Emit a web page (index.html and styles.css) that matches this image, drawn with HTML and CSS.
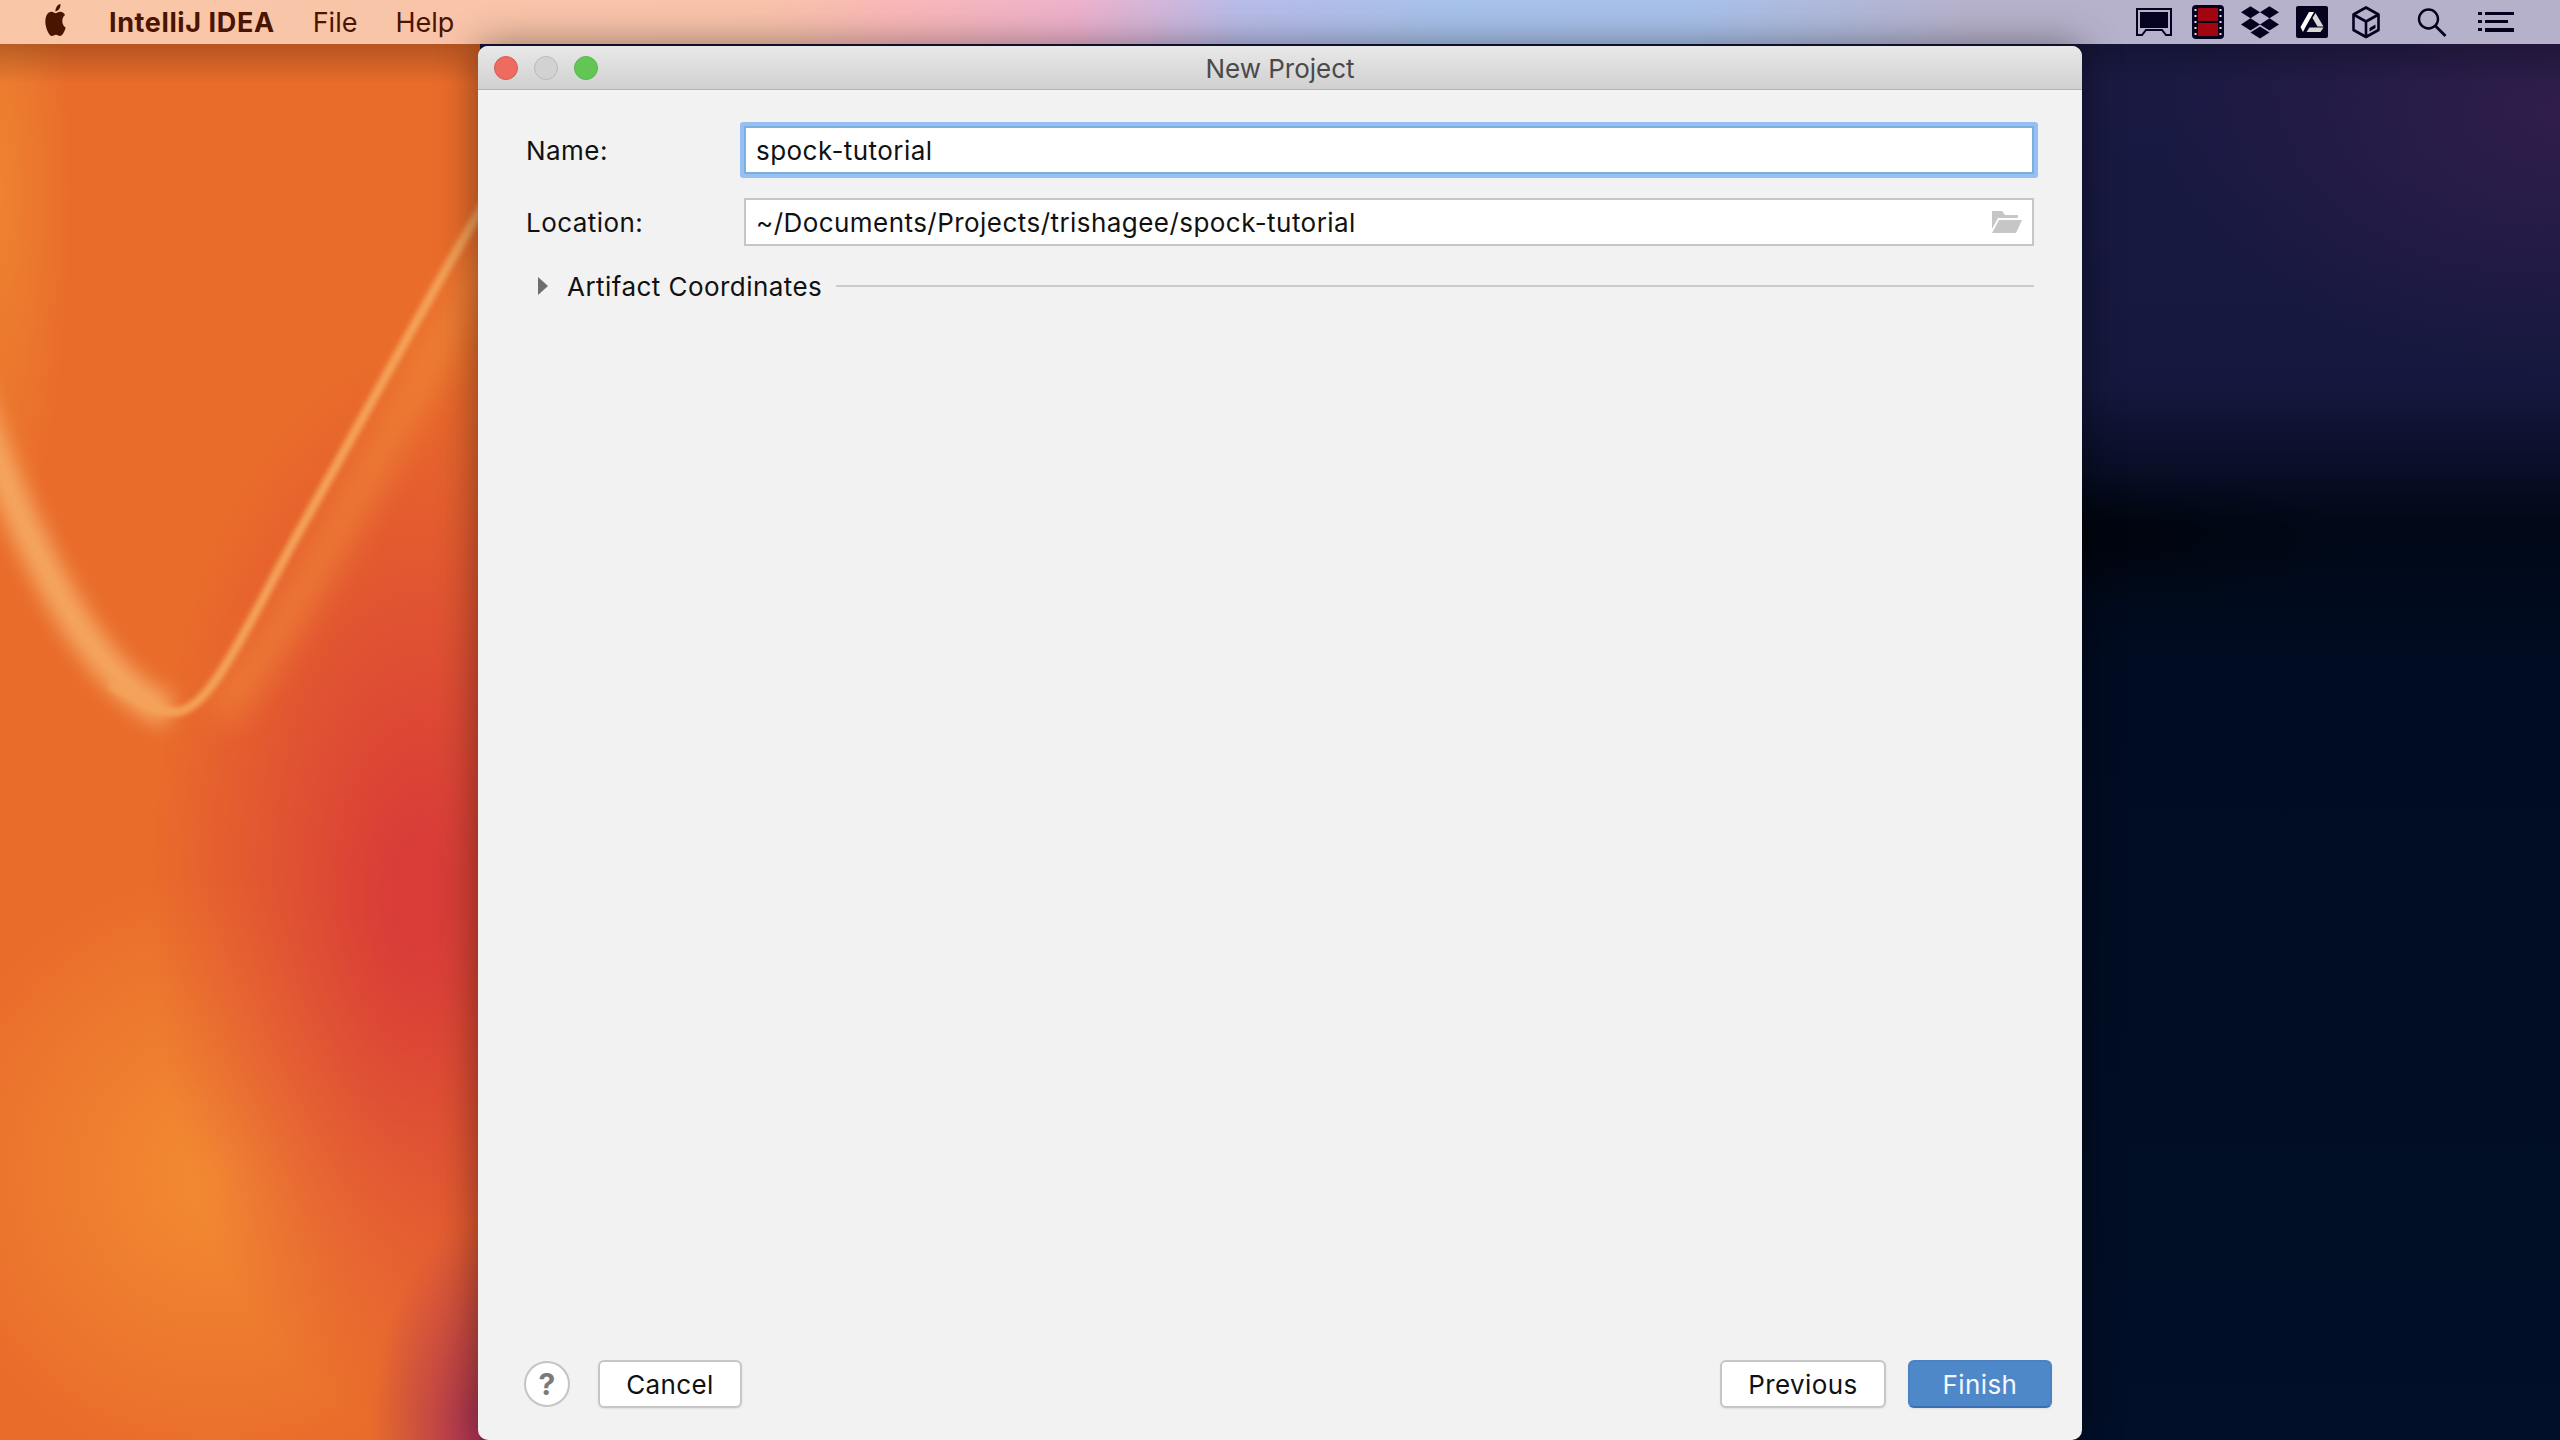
FILE: index.html
```html
<!DOCTYPE html>
<html lang="en">
<head>
    <meta charset="UTF-8">
    <meta name="viewport" content="width=device-width, initial-scale=1.0">
    <title>New Project</title>
    <link rel="stylesheet" href="styles.css">
</head>
<body>
    <header class="menubar">
        <svg class="apple-logo" viewBox="0 0 24 24" preserveAspectRatio="none" aria-hidden="true">
            <path d="M12.152 6.896c-.948 0-2.415-1.078-3.96-1.04-2.04.027-3.91 1.183-4.961 3.014-2.117 3.675-.546 9.103 1.519 12.09 1.013 1.454 2.208 3.09 3.792 3.039 1.52-.065 2.09-.987 3.935-.987 1.831 0 2.35.987 3.96.948 1.637-.026 2.676-1.48 3.676-2.948 1.156-1.688 1.636-3.325 1.662-3.415-.039-.013-3.182-1.221-3.22-4.857-.026-3.04 2.48-4.494 2.597-4.559-1.429-2.09-3.623-2.324-4.39-2.376-2-.156-3.675 1.09-4.61 1.09zM15.53 3.83c.843-1.012 1.4-2.427 1.245-3.83-1.207.052-2.662.805-3.532 1.818-.78.896-1.454 2.338-1.273 3.714 1.338.104 2.715-.688 3.559-1.701"/>
        </svg>
        <span class="menu-app">IntelliJ IDEA</span>
        <span class="menu-item">File</span>
        <span class="menu-item">Help</span>

        <div class="tray">
            <!-- screen -->
            <svg class="tray-icon" width="54" height="44" viewBox="0 0 54 44">
                <path d="M10 9h34v26h-5l-4-5H19l-4 5h-5z" fill="none" stroke="#05021f" stroke-width="2"/>
                <rect x="13" y="12" width="28" height="16" fill="#05021f"/>
            </svg>
            <!-- film strip -->
            <svg class="tray-icon" width="54" height="44" viewBox="0 0 54 44">
                <rect x="11" y="5" width="32" height="34" rx="4" fill="#05021f"/>
                <rect x="17" y="8" width="20" height="13" fill="#a00510"/>
                <rect x="17" y="23" width="20" height="13" fill="#a00510"/>
                <g fill="#ddd">
                    <rect x="13.5" y="9" width="2" height="2"/>
                    <rect x="13.5" y="15" width="2" height="2"/>
                    <rect x="13.5" y="21" width="2" height="2"/>
                    <rect x="13.5" y="27" width="2" height="2"/>
                    <rect x="13.5" y="33" width="2" height="2"/>
                    <rect x="38.5" y="9" width="2" height="2"/>
                    <rect x="38.5" y="15" width="2" height="2"/>
                    <rect x="38.5" y="21" width="2" height="2"/>
                    <rect x="38.5" y="27" width="2" height="2"/>
                    <rect x="38.5" y="33" width="2" height="2"/>
                </g>
            </svg>
            <!-- dropbox -->
            <svg class="tray-icon" width="50" height="44" viewBox="0 0 50 44">
                <path transform="translate(6 3.4) scale(1.583)" fill="#05021f" d="M6 1.807L0 5.629l6 3.822 6.001-3.822L6 1.807zM18 1.807l-6 3.822 6 3.822 6-3.822-6-3.822zM0 13.274l6 3.822 6.001-3.822L6 9.452l-6 3.822zM18 9.452l-6 3.822 6 3.822 6-3.822-6-3.822zM6 18.371l6.001 3.822 6-3.822-6-3.822L6 18.371z"/>
            </svg>
            <!-- drive -->
            <svg class="tray-icon" width="54" height="44" viewBox="0 0 54 44">
                <rect x="11" y="6" width="32" height="32" rx="2" fill="#05021f"/>
                <path fill="#fff" d="M24 12h5L20.500 27l-2.500 5-2.500-5z"/>
                <path fill="#d8d8d8" d="M30.500 13l8 13.500h-6L27.500 18z"/>
                <path fill="#d8d8d8" d="M24.500 27.500h14l-3 4.500H21.500z"/>
            </svg>
            <!-- box -->
            <svg class="tray-icon" width="54" height="44" viewBox="0 0 54 44">
                <path d="M27 7.500l12.500 7v15.500L27 37l-12.500-7V14.500zM14.500 14.500L27 21.500l12.500-7M27 21.500V37" fill="none" stroke="#05021f" stroke-width="2.600" stroke-linejoin="round"/>
                <path d="M30.500 31.500l6-3.500v-3.500l-6 3.500z" fill="#05021f"/>
            </svg>
            <!-- search -->
            <svg class="tray-icon" width="78" height="44" viewBox="0 0 78 44">
                <circle cx="35.500" cy="19" r="9.500" fill="none" stroke="#05021f" stroke-width="2.400"/>
                <path d="M42.500 26l10 10" stroke="#05021f" stroke-width="2.800"/>
            </svg>
            <!-- notification list -->
            <svg class="tray-icon" width="50" height="44" viewBox="0 0 50 44">
                <g fill="#05021f">
                    <rect x="7" y="12" width="4" height="3"/>
                    <rect x="7" y="20" width="4" height="3"/>
                    <rect x="7" y="28" width="4" height="3"/>
                    <rect x="14" y="12" width="29" height="3"/>
                    <rect x="14" y="20" width="23" height="3"/>
                    <rect x="14" y="28" width="29" height="4"/>
                </g>
            </svg>
        </div>
    </header>

    <main class="desktop">
        <!-- wallpaper streak on the left -->
        <svg class="streak" width="480" height="800" viewBox="0 0 480 800">
            <defs>
                <filter id="soft-wide" x="-30%" y="-30%" width="160%" height="160%"><feGaussianBlur stdDeviation="10"/></filter>
                <filter id="soft-thin" x="-30%" y="-30%" width="160%" height="160%"><feGaussianBlur stdDeviation="2.500"/></filter>
                <filter id="soft-glow" x="-30%" y="-30%" width="160%" height="160%"><feGaussianBlur stdDeviation="16"/></filter>
            </defs>
            <path d="M220 670C260 620 290 570 330 500C380 410 440 300 490 210" fill="none" stroke="#f28a3a" stroke-width="30" opacity="0.7" filter="url(#soft-glow)"/>
            <path d="M-30 340C20 490 90 640 170 668" fill="none" stroke="#f5a862" stroke-width="32" filter="url(#soft-wide)"/>
            <path d="M110 640C135 655 155 668 175 668C210 668 245 585 300 486C360 380 430 250 490 150" fill="none" stroke="#f4a258" stroke-width="9" filter="url(#soft-thin)"/>
        </svg>

        <section class="dialog">
            <div class="titlebar">
                <div class="traffic">
                    <span class="light light-close"></span>
                    <span class="light light-min"></span>
                    <span class="light light-max"></span>
                </div>
                <span class="title">New Project</span>
            </div>

            <div class="form">
                <div class="form-row">
                    <label class="form-label">Name:</label>
                    <div class="field field-focus">spock-tutorial</div>
                </div>
                <div class="form-row">
                    <label class="form-label">Location:</label>
                    <div class="field">
                        ~/Documents/Projects/trishagee/spock-tutorial
                        <svg class="folder-icon" width="30" height="22" viewBox="0 0 30 22">
                            <path d="M0 0h10l3 4h13v3H6L0 18z" fill="#c6c6c6"/>
                            <path d="M7 9h23l-6 13H0z" fill="#c6c6c6"/>
                        </svg>
                    </div>
                </div>
                <div class="disclosure">
                    <span class="arrow"></span>
                    <span class="disclosure-label">Artifact Coordinates</span>
                    <span class="disclosure-line"></span>
                </div>
            </div>

            <div class="footer">
                <button class="help-button">?</button>
                <button class="button button-cancel">Cancel</button>
                <div class="footer-right">
                    <button class="button button-previous">Previous</button>
                    <button class="button button-finish">Finish</button>
                </div>
            </div>
        </section>
    </main>
</body>
</html>
```

FILE: styles.css
```css
html, body {
    margin: 0;
    padding: 0;
    height: 100%;
}

body {
    display: flex;
    flex-direction: column;
    overflow: hidden;
    font-family: "Inter", "Liberation Sans", sans-serif;
    color: #111;
}

/* menu bar */
.menubar {
    height: 44px;
    flex-shrink: 0;
    display: flex;
    align-items: center;
    padding-left: 43px;
    background: linear-gradient(to right, #f9c7a7 0%, #f9c3ab 30%, #fab8b8 35%, #eeb2cc 42%, #b9bce9 48.4%, #a7c2eb 56.6%, #a9c1ea 66.4%, #b7b2cc 77%, #b6b1cb 100%);
    font-size: 27px;
    color: #491500;
}

.apple-logo {
    width: 25px;
    height: 32px;
    fill: #491500;
    margin-right: 41px;
    margin-top: -4px;
}

.menu-app {
    font-weight: 700;
    letter-spacing: 0.6px;
    margin-right: 38px;
}

.menu-item {
    margin-right: 38px;
}

.tray {
    margin-left: auto;
    padding-right: 39px;
    display: flex;
}

/* wallpaper */
.desktop {
    flex: 1;
    min-height: 0;
    position: relative;
    display: flex;
    padding: 2px 0 0 478px;
    background:
        linear-gradient(to bottom, rgba(0, 0, 0, 0.22) 0, rgba(0, 0, 0, 0) 40px),
        radial-gradient(ellipse 110px 220px at 480px 1400px, rgba(160, 40, 90, 0.9), rgba(160, 40, 90, 0) 100%),
        radial-gradient(ellipse 270px 540px at 420px 850px, rgba(216, 58, 56, 0.95) 10%, rgba(216, 58, 56, 0) 100%),
        radial-gradient(ellipse 290px 300px at 215px 1130px, rgba(243, 140, 50, 1), rgba(243, 140, 50, 0) 100%),
        radial-gradient(ellipse 70px 360px at 0 150px, rgba(240, 140, 50, 0.7), rgba(240, 140, 50, 0) 100%),
        linear-gradient(to right, #e96c2b 0, #e96c2b 480px, transparent 480px),
        radial-gradient(ellipse 280px 70px at 2082px 496px, rgba(0, 0, 0, 0.45), rgba(0, 0, 0, 0) 100%),
        radial-gradient(ellipse 400px 260px at 2560px 70px, #301d4b, rgba(48, 29, 75, 0) 100%),
        linear-gradient(to bottom, #1a1a44 0, #15183e 340px, #000817 480px, #000c22 620px, #010f28 100%);
}

.streak {
    position: absolute;
    left: 0;
    top: 0;
}

/* dialog */
.dialog {
    position: relative;
    width: 1604px;
    display: flex;
    flex-direction: column;
    background: #f2f2f2;
    border-radius: 10px;
    box-shadow: 0 0 40px rgba(0, 0, 0, 0.45);
}

.titlebar {
    height: 41px;
    padding-top: 2px;
    position: relative;
    display: flex;
    align-items: center;
    justify-content: center;
    background: linear-gradient(to bottom, #e9e9e9, #d0d0d0);
    border-bottom: 1px solid #b4b4b4;
    border-radius: 10px 10px 0 0;
}

.traffic {
    position: absolute;
    left: 16px;
    top: 10px;
    display: flex;
    gap: 16px;
}

.light {
    width: 24px;
    height: 24px;
    border-radius: 50%;
    box-sizing: border-box;
}

.light-close {
    background: #ee6b60;
    border: 1px solid #d85a50;
}

.light-min {
    background: #d2d2d2;
    border: 1px solid #bababa;
}

.light-max {
    background: #62c554;
    border: 1px solid #58b94b;
}

.title {
    font-size: 26px;
    color: #4a4a4a;
}

.form {
    padding: 36px 48px 0;
    display: flex;
    flex-direction: column;
    gap: 24px;
    font-size: 26px;
    letter-spacing: 0.45px;
}

.form-row {
    display: flex;
    align-items: center;
}

.form-label {
    width: 218px;
    flex-shrink: 0;
}

.field {
    flex: 1;
    height: 48px;
    box-sizing: border-box;
    display: flex;
    align-items: center;
    justify-content: space-between;
    padding: 0 10px;
    background: #fff;
    border: 2px solid #c6c6c6;
}

.field-focus {
    border-color: #7eaede;
    box-shadow: 0 0 0 4px #96c0f2;
    border-radius: 1px;
}

.disclosure {
    display: flex;
    align-items: center;
    height: 32px;
}

.arrow {
    width: 0;
    height: 0;
    margin-left: 12px;
    margin-right: 19px;
    border-left: 10px solid #6e6e6e;
    border-top: 9px solid transparent;
    border-bottom: 9px solid transparent;
}

.disclosure-line {
    flex: 1;
    height: 2px;
    margin-left: 14px;
    background: #cbcbcb;
}

.footer {
    margin-top: auto;
    padding: 0 30px 32px 46px;
    display: flex;
    align-items: center;
}

.footer-right {
    margin-left: auto;
    display: flex;
    gap: 22px;
}

.button {
    height: 48px;
    box-sizing: border-box;
    padding: 0;
    font-family: inherit;
    font-size: 26px;
    letter-spacing: 0.4px;
    color: #111;
    background: #fff;
    border: 2px solid #c6c6c6;
    border-radius: 6px;
    box-shadow: 0 1px 2px rgba(0, 0, 0, 0.08);
}

.button-cancel {
    width: 144px;
    margin-left: 28px;
}

.button-previous {
    width: 166px;
}

.button-finish {
    width: 144px;
    color: #f4f7fc;
    background: #4f88c9;
    border-color: #4a82c4;
    border-bottom-color: #3a6fb2;
}

.help-button {
    width: 46px;
    height: 46px;
    box-sizing: border-box;
    padding: 0;
    font-family: inherit;
    font-size: 30px;
    font-weight: 700;
    color: #7a7a7a;
    background: #fff;
    border: 2px solid #c4c4c4;
    border-radius: 50%;
}
```
